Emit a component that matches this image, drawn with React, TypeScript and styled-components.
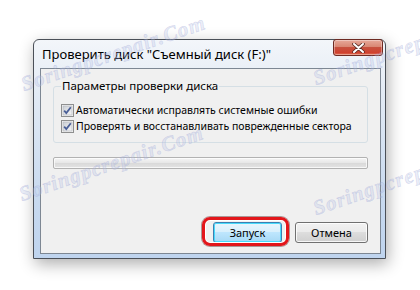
import React from 'react';
import styled, { createGlobalStyle } from 'styled-components';

const GlobalStyle = createGlobalStyle`
  html, body {
    margin: 0;
    padding: 0;
    background: #ffffff;
  }
  body {
    font-family: "Noto Sans", "Liberation Sans", sans-serif;
    font-size: 11px;
    color: #000;
  }
`;

const Page = styled.div`
  position: relative;
  width: 420px;
  height: 290px;
  box-sizing: border-box;
  padding: 39px 0 0 33px;
  overflow: hidden;
  background: #fff;
`;

const Window = styled.div`
  width: 353px;
  height: 220px;
  box-sizing: border-box;
  border: 1px solid #4b5058;
  border-radius: 6px 6px 0 0;
  background: linear-gradient(#f3f6fa, #e2eaf4 25%, #c9daef 70%, #bfd4ee);
  box-shadow: 2px 5px 16px rgba(0, 0, 0, 0.32);
  display: flex;
  flex-direction: column;
`;

const TitleBar = styled.div`
  height: 28px;
  display: flex;
  align-items: center;
  justify-content: space-between;
  padding: 0 2px 0 8px;
`;

const Title = styled.span`
  font-size: 13px;
  white-space: nowrap;
`;

const CloseButton = styled.div`
  align-self: flex-start;
  margin-top: -1px;
  width: 50px;
  height: 17px;
  box-sizing: border-box;
  border: 1px solid #6e2a22;
  border-radius: 3px;
  background: linear-gradient(#e7a99a, #d98774 45%, #c7513f 50%, #d0412f 85%, #e27a5d);
  box-shadow: inset 0 0 0 1px rgba(255, 255, 255, 0.35);
  display: flex;
  align-items: center;
  justify-content: center;
`;

const Client = styled.div`
  flex: 1;
  margin: 0 4px 4px 6px;
  border: 1px solid #7d8793;
  background: #f0f0f0;
  display: flex;
  flex-direction: column;
  padding: 9px 12px 10px 12px;
`;

const Group = styled.fieldset`
  margin: 0;
  padding: 8px 0 8px 7px;
  border: 1px solid #d5dfe5;
  border-radius: 3px;
  min-width: 0;
`;

const Legend = styled.legend`
  padding: 0 1px;
  font-size: 11.5px;
  line-height: 16px;
`;

const CheckRow = styled.label`
  display: flex;
  align-items: center;
  height: 16px;
  gap: 2px;
  font-size: 10.5px;
  white-space: nowrap;
`;

const Box = styled.span`
  width: 13px;
  height: 13px;
  flex: none;
  display: block;
`;

const Progress = styled.div`
  margin-top: 14px;
  height: 12px;
  box-sizing: border-box;
  border: 1px solid #b2b2b2;
  border-radius: 2px;
  background: linear-gradient(#f6f6f6, #e8e8e8 45%, #dadada 55%, #e4e4e4);
  box-shadow: inset 0 0 0 1px rgba(255, 255, 255, 0.7);
`;

const ButtonRow = styled.div`
  margin-top: auto;
  display: flex;
  justify-content: flex-end;
  gap: 13px;
`;

const Highlight = styled.div`
  position: relative;
  display: flex;
`;

const RedRing = styled.div`
  position: absolute;
  left: -11px;
  right: -7px;
  top: -5px;
  bottom: -3px;
  border: 3px solid #e3161b;
  border-radius: 8px;
  box-shadow: 0 0 0 1px rgba(90, 40, 40, 0.45), inset 0 0 0 1px #ffffff;
  pointer-events: none;
`;

const Button = styled.div<{ $primary?: boolean }>`
  width: ${(p) => (p.$primary ? '69px' : '73px')};
  height: 21px;
  box-sizing: border-box;
  border: 1px solid ${(p) => (p.$primary ? '#3c7fb1' : '#707070')};
  border-radius: 3px;
  background: ${(p) =>
    p.$primary
      ? 'linear-gradient(#eaf6fd, #d9f0fc 45%, #bee6fd 50%, #a7d9f5)'
      : 'linear-gradient(#f2f2f2, #ebebeb 45%, #dddddd 50%, #cfcfcf)'};
  box-shadow: inset 0 0 0 1px ${(p) => (p.$primary ? '#48dafb' : 'rgba(255,255,255,0.8)')};
  display: flex;
  align-items: center;
  justify-content: center;
  font-size: 11px;
`;

const Watermark = styled.span<{ $x: number; $y: number }>`
  position: absolute;
  left: ${(p) => p.$x}px;
  top: ${(p) => p.$y}px;
  font-family: "Liberation Serif", serif;
  font-style: italic;
  font-weight: bold;
  font-size: 21px;
  letter-spacing: 1px;
  color: rgba(185, 195, 232, 0.3);
  -webkit-text-stroke: 0.6px rgba(150, 160, 210, 0.35);
  transform: rotate(-19deg);
  transform-origin: left bottom;
  white-space: nowrap;
  pointer-events: none;
`;

const CheckBox = () => (
  <Box>
    <svg width="13" height="13" viewBox="0 0 13 13">
      <defs>
        <linearGradient id="cbg" x1="0" y1="0" x2="1" y2="1">
          <stop offset="0" stopColor="#cbcfd5" />
          <stop offset="1" stopColor="#f6f6f6" />
        </linearGradient>
      </defs>
      <rect x="0.5" y="0.5" width="12" height="12" fill="#f4f4f4" stroke="#8e8f8f" />
      <rect x="2" y="2" width="9" height="9" fill="url(#cbg)" stroke="#aeb3b9" strokeWidth="0.6" />
      <path d="M3.2 6.6 L5.3 9 L9.8 3.3" fill="none" stroke="#4a5f97" strokeWidth="1.8" />
    </svg>
  </Box>
);

const CloseX = () => (
  <svg width="13" height="10" viewBox="0 0 13 10">
    <path d="M2 1 L11 9 M11 1 L2 9" stroke="#5a2a24" strokeWidth="3.6" strokeLinecap="round" />
    <path d="M2 1 L11 9 M11 1 L2 9" stroke="#ffffff" strokeWidth="2" strokeLinecap="round" />
  </svg>
);

const App = () => (
  <Page>
    <GlobalStyle />
    <Window>
      <TitleBar>
        <Title>Проверить диск "Съемный диск (F:)"</Title>
        <CloseButton>
          <CloseX />
        </CloseButton>
      </TitleBar>
      <Client>
        <Group>
          <Legend>Параметры проверки диска</Legend>
          <CheckRow>
            <CheckBox />
            Автоматически исправлять системные ошибки
          </CheckRow>
          <CheckRow>
            <CheckBox />
            Проверять и восстанавливать поврежденные сектора
          </CheckRow>
        </Group>
        <Progress />
        <ButtonRow>
          <Highlight>
            <Button $primary>Запуск</Button>
            <RedRing />
          </Highlight>
          <Button>Отмена</Button>
        </ButtonRow>
      </Client>
    </Window>
    <Watermark $x={26} $y={72}>Soringpcrepair.Com</Watermark>
    <Watermark $x={318} $y={66}>Soringpcrepair.Com</Watermark>
    <Watermark $x={24} $y={182}>Soringpcrepair.Com</Watermark>
    <Watermark $x={318} $y={196}>Soringpcrepair.Com</Watermark>
  </Page>
);

export default App;
